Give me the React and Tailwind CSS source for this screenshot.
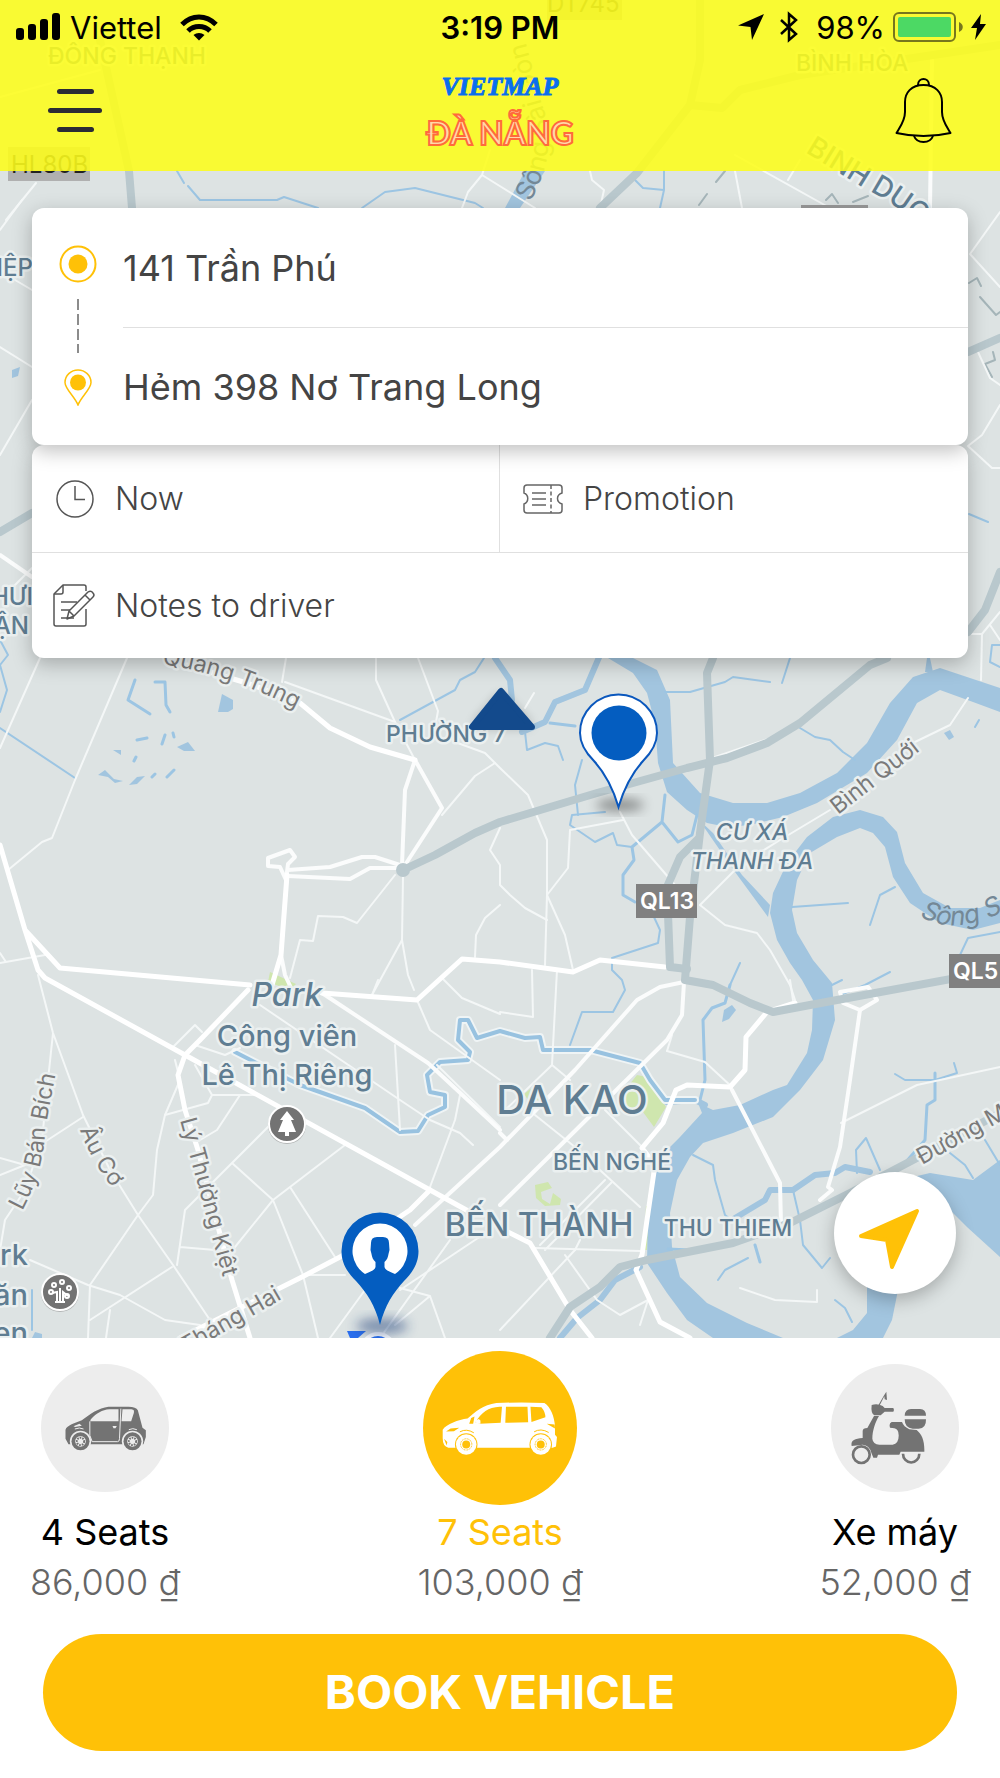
import { useState } from 'react'

const PLACE = '#5f7d92'
const STREET = '#7a7a7a'

const WATER_AREAS = [
  'M608 658 633 673 647 693 655 723 658 763 667 792 687 810 707 823 727 827 750 825 783 817 817 803 867 773 897 740 917 703 940 690 973 702 1000 712V688L940 668 913 677 890 703 867 743 837 773 800 793 767 803 733 803 700 793 673 763 670 700 657 670 633 658Z',
  'M1000 900 980 908 950 908 923 893 905 863 897 832 883 817 860 810 833 817 807 837 787 863 773 893 770 913 777 940 790 963 802 980 813 1000 812 1030 807 1053 787 1085 773 1090 740 1105 713 1110 698 1103 702 1113 680 1137 667 1150 655 1173 648 1213 647 1263 667 1293 687 1320 713 1338H783L747 1323 707 1303 680 1277 672 1247 670 1213 677 1180 690 1157 703 1143 733 1133 773 1117 800 1090 823 1060 835 1020 832 983 813 960 797 933 792 910 797 880 810 853 837 837 860 828 873 833 885 847 893 877 910 903 940 923 973 930 1000 923Z',
  'M900 1180 930 1173 973 1180 1000 1160V1257L967 1227 945 1205Z',
  'M867 1280V1313L853 1330 837 1338H883L892 1320 898 1290Z',
  'M697 818 713 833 742 875 770 905 768 917 735 872 706 830Z',
  'M722 1022 724 1010 732 1005 736 1010 729 1019Z',
  'M505 208 525 171H545L520 208Z',
  'M927 658H930L933 672H925Z',
  'M218 712 222 694 233 700 233 709 228 712Z',
  'M177 747 188 742 195 751 184 751Z',
  'M113 750 121 750 121 755Z',
  'M98 775 105 770 114 779 123 781 115 783 108 777Z',
  'M129 785 137 777 145 776 137 784Z',
  'M12 370 20 367 18 376 12 378Z',
  'M944 733 950 730 954 737 949 740Z',
  'M32 1338 35 1332 42 1334 42 1338Z',
]

const STREAMS = [
  'M177 171 184 183M188 186 200 200H277L284 197 318 208',
  'M362 208 385 192 415 188 475 203 483 208',
  'M635 180 643 188 664 190 660 208M664 171V190',
  'M0 640 8 655 0 665 7 690 0 712',
  'M0 728 75 778',
  'M400 720 455 690 460 680 475 672 484 658',
  'M665 692 690 692 725 682 733 677 770 682M790 658 782 683',
  'M800 728 815 737 830 740 843 752 855 760',
  'M632 847 617 845 613 833 595 842 570 825 572 815 605 812',
  'M525 732 527 750 545 743 558 746 563 760M582 760 575 785 578 815',
  'M653 915 660 930 658 943 612 958 612 970 622 980 625 990 613 1012H582L570 1045',
  'M792 907 848 903M870 925 880 895 895 887M960 955 968 938 1000 932',
  'M693 1155 713 1165 715 1180 725 1215 738 1225',
  'M895 1074 905 1080 935 1080 957 1073 954 1063M857 1173 856 1150 866 1138 880 1170',
  'M793 1190 800 1220 803 1245 822 1268 830 1258M718 1280 725 1270 748 1258M835 1300 845 1308 852 1322',
  'M969 514 988 522M1000 645 992 645 990 662 1000 667M840 995 865 985 890 972M832 985 842 980',
  'M730 985 740 963M975 727 979 720M32 1290V1330M950 1153 965 1165 973 1178M985 1140 1000 1165',
]

const CANALS = [
  'M632 847 634 860 623 875 623 895 635 902M665 795 662 822 678 842 692 835 697 815M662 822 632 847',
  'M700 1100 705 1080 703 1020 712 1008 725 1003 730 985',
  'M935 1073V1100L927 1105 925 1140 905 1163',
  'M135 680 128 700 150 714M155 682H165L166 705 170 712',
  'M165 735 162 744M173 733 174 737M134 761 136 757M152 777 155 774M167 777 174 770M137 740 147 738',
  'M550 723 575 726M668 1249 690 1250M755 1245 760 1262',
]

const CREEKS = [
  'M522 732 545 722 555 702 585 690 600 655',
  'M495 658 510 680 512 700',
  'M735 1218 765 1200 770 1190 793 1190 815 1175 835 1173 845 1167 870 1172',
  'M560 1338 577 1318 600 1300 615 1280 640 1267',
  'M667 1102 695 1100 705 1105',
]

const CANAL = 'M235 1052 300 1085 365 1108 400 1132 418 1131 428 1115 445 1107 445 1095 430 1092 427 1075 440 1062 468 1060 470 1052 458 1040 460 1020 468 1020 477 1038 500 1031 525 1038 540 1037 543 1050 590 1050 640 1063 650 1080 665 1100 695 1100'

const MINOR_ROADS = [
  'M0 97 100 70M6 220 36 183M462 208 468 192 482 175 490 150M482 175 535 208',
  'M590 171 592 180 604 190 600 208M735 171 742 208M735 155 830 208M788 180 800 160',
  'M0 230 22 200M10 277 32 290M0 347 32 367M32 400 0 455M32 568 15 585',
  'M1000 212 970 254 1000 287M978 352 990 378 1000 385M1000 405 982 435 968 446 992 468 1000 468',
  'M968 634H982L1000 612M982 634 981 680M990 625 1000 640',
  'M40 658 0 748M127 658 75 780 52 838 42 842 8 870M285 682 395 722M286 658 282 682',
  'M376 658V680L395 722 415 760M418 658 438 711 436 722M455 742 485 753 500 768 528 795 547 840V895L565 935 573 970',
  'M442 815 475 776 495 763M395 875 357 923 343 917 318 916 313 941 300 940 290 978',
  'M403 877 402 940 408 975 414 990M402 940 372 995M500 828 490 850 500 865 500 885 510 895 525 908 547 920M500 905 485 918 476 935 475 957',
  'M547 895 545 965M623 820 570 830 568 868 547 895M620 812 632 835 675 885M700 905 725 925 757 933 770 950 790 985 795 1000',
  'M700 905 740 865 780 840 830 810M915 742 950 725 968 698M715 757 780 735M525 708 534 693',
  'M0 963 45 955M0 953 6 962M38 975 53 1033 83 1115 110 1170 138 1215 173 1265 210 1320M53 1033 48 1080 42 1140 25 1190 5 1220 0 1250',
  'M83 1117 40 1145M0 1158 25 1165 0 1175M173 1047 195 1025 202 1032M195 1045 225 1055 240 1048M165 1115 208 1103 212 1095H255M195 1065 212 1095',
  'M165 1115 157 1150 153 1195 138 1215 90 1285 88 1338M175 1060 180 1080 165 1115M30 1260 88 1285 120 1295 165 1320 200 1325M90 1320 172 1267M110 1310 106 1338',
  'M240 1095 217 1130 200 1140M270 1125 232 1163 185 1210 177 1265M232 1163 273 1200 290 1187 345 1145M273 1200 235 1247M273 1200 303 1275 318 1338M290 1187 335 1257M180 1247 215 1250',
  'M305 1275H345M365 1290 330 1338M400 1288 430 1296 445 1338M430 1296 395 1325M400 1290 490 1230M380 1338 450 1240',
  'M395 1045 400 1130M417 1000 430 1030 465 1055 500 1080M372 995 378 980M437 1065 500 1127M260 1005 400 1100 430 1120 460 1133 473 1145M460 1095 455 1120 430 1187',
  'M442 978 462 998 500 1014M532 970 533 1017 500 1012M557 970 552 1065 500 1115M552 1065 570 1080M535 1115 575 1147 640 1207M605 1110 642 1147',
  'M605 1180 540 1245M612 1182 545 1250M535 1248 640 1251M500 1330 575 1250M565 1255 597 1300 620 1315 648 1300M667 1051 705 1062 732 1087',
  'M841 1123 917 1085 1000 1067M740 1288 775 1300 817 1302 817 1290M507 1230 480 1210M575 1250 580 1240M790 980 793 1000M667 1051 672 1035M640 1325 648 1300',
]

const STREETS = [
  'M415 760 405 790 402 865M415 760 442 808 405 865',
  'M286 880 280 867 268 866V858L290 850 295 857 288 864 286 880',
  'M288 870 330 867 362 857H375L403 866M288 876 350 879 370 868H400',
  'M281 955 285 975 292 990M322 993 428 1063 500 1130',
  'M415 1225 500 1147 575 1070 637 1000 660 987 684 982 682 1015 667 1040 500 1205',
  'M732 1090 780 1183 781 1225M860 1010 850 1080 840 1147 828 1187 832 1190 820 1200',
  'M840 992 868 987 877 1000 860 1010 843 1003ZM500 1133 507 1140',
  'M932 60 930 208M0 555 32 577',
]

const AVENUES = [
  'M170 660 250 684 300 703 330 728 370 747 415 760',
  'M0 845 25 930 60 968 250 985M25 930 38 970 45 978 185 1055 430 1190 470 1212',
  'M287 875 281 955 272 985M322 993 417 1000 462 959 500 962 573 972 600 960 665 967',
  'M248 990 200 1040 185 1055 178 1075 185 1110 198 1150 232 1280 250 1338',
  'M180 1338 300 1278 340 1257 410 1210 430 1190',
  'M500 1228 530 1243 570 1310 592 1338',
  'M795 1003 767 1012 746 1037 745 1070 730 1087 687 1085 676 1090 663 1123 642 1148 655 1165 647 1220 642 1255 636 1270 660 1322 690 1338',
]

const HIGHWAYS = [
  'M700 0V60L690 105 637 173 600 208M690 105 722 108 740 90 800 75 1000 45',
  'M100 40 129 171 132 208M0 532 32 513',
  'M968 352 1000 338M1000 572 985 610 968 632',
  'M403 870 435 855 475 833 500 822 597 793 687 768 727 758 767 743 800 723 870 665 887 658',
  'M713 658 707 673 710 760 700 833 690 917 685 980 713 985 750 1003 773 1012 810 1005 1000 970',
  'M697 840 680 857 667 887 670 967 687 969',
  'M550 1338 570 1307 600 1287 620 1267 647 1260 733 1243 790 1223 850 1193 913 1160 1000 1113',
]

const TRACKS = 'M716 182 725 171M699 205 707 194M826 200 832 194 838 203M853 202 868 196M969 283 977 278 981 286M980 297 996 315 1000 312M993 352 995 360 985 364 992 377'

const PLACES = [
  { text: 'ĐÔNG THẠNH', x: 48, y: 64, size: 23 },
  { text: 'BÌNH HÒA', x: 796, y: 71, size: 23 },
  { text: 'IỆP', x: 33, y: 276, size: 24, anchor: 'end' },
  { text: 'HƯI', x: 33, y: 605, size: 24, anchor: 'end' },
  { text: 'ẬN', x: 29, y: 634, size: 24, anchor: 'end' },
  { text: 'PHƯỜNG 7', x: 386, y: 742, size: 23 },
  { text: 'CƯ XÁ', x: 752, y: 840, size: 23, anchor: 'middle', italic: true },
  { text: 'THANH ĐA', x: 752, y: 869, size: 23, anchor: 'middle', italic: true },
  { text: 'Park', x: 287, y: 1006, size: 32, anchor: 'middle', italic: true },
  { text: 'Công viên', x: 287, y: 1046, size: 29, anchor: 'middle' },
  { text: 'Lê Thị Riêng', x: 287, y: 1085, size: 29, anchor: 'middle' },
  { text: 'DA KAO', x: 572, y: 1114, size: 40, anchor: 'middle' },
  { text: 'BẾN NGHÉ', x: 612, y: 1170, size: 23, anchor: 'middle' },
  { text: 'BẾN THÀNH', x: 539, y: 1236, size: 32, anchor: 'middle' },
  { text: 'THU THIEM', x: 728, y: 1236, size: 23, anchor: 'middle' },
  { text: 'rk', x: 28, y: 1265, size: 29, anchor: 'end' },
  { text: 'ăn', x: 28, y: 1305, size: 29, anchor: 'end' },
  { text: 'en', x: 28, y: 1343, size: 29, anchor: 'end' },
]

const CURVED = [
  { id: 'quang-trung', text: 'Quang Trung', d: 'M162 664Q240 676 320 722', size: 23 },
  { id: 'binh-quoi', text: 'Bình Quới', d: 'M838 815 940 735', size: 23 },
  { id: 'luy-ban-bich', text: 'Lũy Bán Bích', d: 'M22 1211Q44 1170 45 1130L62 1040', size: 23 },
  { id: 'au-co', text: 'Âu Cơ', d: 'M80 1130Q90 1160 120 1198', size: 23 },
  { id: 'ly-thuong-kiet', text: 'Lý Thường Kiệt', d: 'M180 1120 232 1310', size: 23 },
  { id: 'thang-hai', text: 'Tháng Hai', d: 'M186 1354 310 1283', size: 23 },
  { id: 'duong-m', text: 'Đường M', d: 'M922 1165 1040 1100', size: 23 },
  { id: 'song-s', text: 'Sông S', d: 'M920 916Q960 940 1020 902', size: 26, italic: true, bare: true },
  { id: 'song-sai-gon', text: 'Sông Sài Gòn', d: 'M530 202Q560 150 542 105L520 20', size: 26, bare: true },
  { id: 'binh-duong', text: 'BINH DUONG', d: 'M805 152 860 186Q900 205 950 250', size: 28, color: PLACE },
]

function Lines({ items, width, color }) {
  return (
    <g fill="none" stroke={color} strokeWidth={width} strokeLinejoin="round" strokeLinecap="round">
      {items.map((d) => <path key={d} d={d} />)}
    </g>
  )
}

function RoadBadge({ x, y, width, label }) {
  return (
    <g>
      <rect x={x} y={y} width={width} height="34" fill="#808080" />
      <text x={x + 4} y={y + 25} fontSize="23" fontWeight="600" fill="#fff">{label}</text>
    </g>
  )
}

function MapView() {
  return (
    <svg
      className="absolute inset-0 h-full w-full"
      viewBox="0 0 1000 1338"
      preserveAspectRatio="xMidYMin slice"
      role="img"
      aria-label="Map"
    >
      <defs>
        <filter id="soft" x="-50%" y="-50%" width="200%" height="200%">
          <feGaussianBlur stdDeviation="6" />
        </filter>
      </defs>

      <rect width="1000" height="1338" fill="#dde3e3" />

      <g fill="#cfe6ae">
        <path d="M625 1090 637 1075 647 1077 666 1107 654 1127 643 1112 627 1112Z" />
        <path d="M524 1094 534 1086 545 1090 546 1104 535 1110Z" />
        <path d="M270 972 296 984 290 990 268 982Z" />
        <path d="M646 1206H651L647 1250H644Z" />
        <path d="M535 1185 548 1182 552 1188 541 1192 542 1199 550 1204 553 1193 561 1199 560 1205 545 1206 536 1198Z" />
      </g>

      <g fill="#a2c5df">{WATER_AREAS.map((d) => <path key={d} d={d} />)}</g>
      <Lines items={STREAMS} width={2} color="#9cc5e3" />
      <Lines items={CANALS} width={3} color="#9cc5e3" />
      <Lines items={CREEKS} width={6} color="#a2c5df" />
      <Lines items={[CANAL]} width={8} color="#eff4f5" />
      <Lines items={[CANAL]} width={4} color="#98c2e0" />

      <Lines items={[TRACKS]} width={2} color="#a5b5b9" />
      <Lines items={MINOR_ROADS} width={2} color="#f4f7f7" />
      <Lines items={STREETS} width={4} color="#fbfcfc" />
      <Lines items={AVENUES} width={5} color="#ffffff" />
      <Lines items={HIGHWAYS} width={8} color="#b9c8cd" />
      <circle cx="403" cy="870" r="7" fill="#b9c8cd" />

      <g fontFamily="Inter, sans-serif">
        <rect x="547" y="-14" width="75" height="34" fill="#b0b0b0" />
        <text x="547" y="12" fontSize="24" fill="#444">DT745</text>
        <rect x="8" y="147" width="82" height="34" fill="#b0b0b0" />
        <text x="11" y="173" fontSize="24" fill="#222">HL80B</text>
        <rect x="801" y="205" width="67" height="34" fill="#9a9a9a" />
        <RoadBadge x={636} y={884} width={61} label="QL13" />
        <RoadBadge x={949} y={954} width={61} label="QL5" />

        <g stroke="#ebf0f0" strokeWidth="5" strokeLinejoin="round" paintOrder="stroke" fontWeight="500">
          {PLACES.map((p) => (
            <text
              key={p.text}
              x={p.x}
              y={p.y}
              fontSize={p.size}
              fill={PLACE}
              textAnchor={p.anchor || 'start'}
              fontStyle={p.italic ? 'italic' : 'normal'}
            >
              {p.text}
            </text>
          ))}
        </g>

        {CURVED.map((c) => (
          <g key={c.id}>
            <path id={c.id} d={c.d} fill="none" />
            <text
              fontSize={c.size}
              fill={c.color || (c.bare ? '#748896' : STREET)}
              fontStyle={c.italic ? 'italic' : 'normal'}
              fontWeight={c.color ? 500 : 400}
              stroke={c.bare ? 'none' : '#ebf0f0'}
              strokeWidth="5"
              strokeLinejoin="round"
              paintOrder="stroke"
            >
              <textPath href={`#${c.id}`}>{c.text}</textPath>
            </text>
          </g>
        ))}
      </g>

      {/* park markers */}
      <g fill="#737373" stroke="#fff" strokeWidth="2">
        <circle cx="287" cy="1125" r="19" fill="#8a8a8a" stroke="none" opacity="0.5" />
        <circle cx="287" cy="1124" r="18" />
        <circle cx="60" cy="1293" r="19" fill="#8a8a8a" stroke="none" opacity="0.5" />
        <circle cx="60" cy="1292" r="18" />
      </g>
      <path d="M287 1111 294 1120H291L296 1132H289V1136H285V1132H278L283 1120H280Z" fill="#fff" />
      <g fill="none" stroke="#fff" strokeWidth="2">
        <path d="M55 1302H65M60 1302V1288M57 1302V1292L52 1293M63 1302V1292L68 1296" />
        <circle cx="51" cy="1292" r="2" />
        <circle cx="54" cy="1285" r="2" />
        <circle cx="62" cy="1282" r="2" />
        <circle cx="69" cy="1288" r="2" />
        <circle cx="67" cy="1296" r="2" />
      </g>

      {/* heading arrow */}
      <path d="M501 694 473 726H532Z" fill="#000" opacity="0.35" filter="url(#soft)" />
      <path d="M501 691 472 727H532Z" fill="#134a8c" stroke="#134a8c" strokeWidth="6" strokeLinejoin="round" />

      {/* destination pin */}
      <ellipse cx="620" cy="805" rx="24" ry="6" fill="#000" opacity="0.4" filter="url(#soft)" />
      <path
        d="M618.500 807C612 785 604 772 594 761C585 752 580 744 580 733A38.500 38.500 0 0 1 657 733C657 744 652 752 643 761C633 772 625 785 618.500 807Z"
        fill="#fff"
        stroke="#0a57bd"
        strokeWidth="2"
      />
      <circle cx="619" cy="733" r="27.500" fill="#045dc0" />

      {/* pickup pin */}
      <circle cx="379" cy="1368" r="32" fill="#7f9fd6" opacity="0.8" />
      <path d="M347 1331H366L358 1338H350Z" fill="#2b6fee" />
      <circle cx="378" cy="1350" r="16" fill="#2b6fee" stroke="#fff" strokeWidth="4" />
      <ellipse cx="382" cy="1326" rx="26" ry="8" fill="#1c3c78" opacity="0.5" filter="url(#soft)" />
      <path
        d="M380 1325C375 1305 367 1293 356 1281C346 1271 341.500 1262 341.500 1251A38.500 38.500 0 0 1 418.500 1251C418.500 1262 414 1271 404 1281C393 1293 385 1305 380 1325Z"
        fill="#045dc0"
      />
      <path
        d="M365 1274A27.500 27.500 0 1 1 395 1274C390 1272 385 1270 384.500 1267V1262C387 1260 388 1257 388.500 1254L389.500 1250L389 1243Q389 1237 383 1237H377Q371 1237 371 1243L370.500 1250L371.500 1254C372 1257 373 1260 375.500 1262V1267C375 1270 370 1272 365 1274Z"
        fill="#fff"
      />
    </svg>
  )
}

function StatusBar() {
  return (
    <div className="grid h-[54px] grid-cols-3 items-center px-[14px] text-[31px] leading-none text-black">
      <div className="flex items-center gap-[10px]">
        <svg className="h-7 w-[46px]" viewBox="0 0 46 28" aria-hidden="true">
          <rect x="2" y="15" width="8" height="12" rx="3" />
          <rect x="14" y="11" width="8" height="16" rx="3" />
          <rect x="26" y="6" width="8" height="21" rx="3" />
          <rect x="38" y="0" width="8" height="27" rx="3" />
        </svg>
        <span>Viettel</span>
        <svg className="ml-2 h-[27px] w-[38px]" viewBox="0 0 38 27" fill="none" stroke="#000" strokeWidth="5" aria-hidden="true">
          <path d="M2 10.500C12 0.500 26 0.500 36 10.500" />
          <path d="M8 17C14 11 24 11 30 17" />
          <path d="M19 26.500 13.500 21C16.500 18.300 21.500 18.300 24.500 21Z" fill="#000" stroke="none" />
        </svg>
      </div>
      <time className="text-center font-semibold">3:19 PM</time>
      <div className="flex items-center justify-end">
        <svg className="mr-4 h-[26px] w-[26px]" viewBox="0 0 26 26" aria-hidden="true">
          <path d="M26 0 14 26 12.500 13 0 11.500Z" />
        </svg>
        <svg className="mr-[18px] h-8 w-[18px]" viewBox="0 0 18 32" fill="none" stroke="#000" strokeWidth="2.500" aria-hidden="true">
          <path d="M1 9 16 23 9 29V3L16 9 1 23" />
        </svg>
        <span>98%</span>
        <svg className="ml-2 h-[30px] w-[70px]" viewBox="0 0 70 30" aria-hidden="true">
          <rect x="1" y="1" width="61" height="28" rx="5" fill="none" stroke="#77761d" strokeWidth="2" />
          <rect x="5" y="5" width="53" height="20" rx="2" fill="#4cd964" />
          <path d="M66 10C71 12 71 18 66 20Z" fill="#77761d" />
        </svg>
        <svg className="ml-2 h-[26px] w-[15px]" viewBox="0 0 15 26" aria-hidden="true">
          <path d="M10 0 0 14H6L4 26 15 10H9Z" />
        </svg>
      </div>
    </div>
  )
}

function Header() {
  return (
    <header className="bg-[#fdfd1a]/88">
      <StatusBar />
      <div className="grid h-[117px] grid-cols-3 items-center px-12 pb-1">
        <button type="button" aria-label="Menu" className="flex w-[54px] flex-col items-center gap-[14px]">
          <span className="h-[5px] w-[37px] rounded-full bg-[#2b2b35]" />
          <span className="h-[5px] w-[54px] rounded-full bg-[#2b2b35]" />
          <span className="h-[5px] w-[37px] rounded-full bg-[#2b2b35]" />
        </button>
        <h1 className="flex flex-col items-center gap-2 pt-1">
          <span className="font-['Liberation_Serif',serif] text-[26px] leading-[32px] font-bold text-[#0a6eee] italic [-webkit-text-stroke:1px_#0a6eee]">VIETMAP</span>
          <span className="font-[Lato,sans-serif] text-[32px] leading-[44px] font-bold text-[#ffd9a8] [-webkit-text-stroke:2px_#ff6a3c]">ĐÀ NẴNG</span>
        </h1>
        <button type="button" aria-label="Notifications" className="justify-self-end">
          <svg className="h-[66px] w-[57px]" viewBox="0 0 57 66" fill="none" stroke="#000" strokeWidth="2" strokeLinejoin="round">
            <path d="M23 7C23 -1 34 -1 34 7" />
            <path d="M28.500 7C16 7 10 15 10 24V34C10 43 5 49 1.500 55C19 59 38 59 55.500 55C52 49 47 43 47 34V24C47 15 41 7 28.500 7Z" />
            <path d="M19 58C22 66 35 66 38 58" />
          </svg>
        </button>
      </div>
    </header>
  )
}

function RouteCard() {
  return (
    <div className="relative z-10 flex rounded-xl bg-white text-[#444] shadow-[0_6px_20px_rgba(0,0,0,0.25)]">
      <div className="flex w-[91px] shrink-0 flex-col items-center gap-4 pt-[37px]">
        <svg className="h-[38px] w-[38px]" viewBox="0 0 38 38" aria-hidden="true">
          <circle cx="19" cy="19" r="17.500" fill="none" stroke="#ffc107" strokeWidth="2" />
          <circle cx="19" cy="19" r="9.500" fill="#ffc107" />
        </svg>
        <svg className="h-[54px] w-[2px]" viewBox="0 0 2 54" aria-hidden="true">
          <path d="M1 0V54" stroke="#8c8c8c" strokeWidth="2" strokeDasharray="11 4" />
        </svg>
        <svg className="h-[37px] w-[28px]" viewBox="0 0 28 37" aria-hidden="true">
          <path d="M14 36C11 28 1 20 1 13.500A13 12.500 0 0 1 27 13.500C27 20 17 28 14 36Z" fill="none" stroke="#ffc107" strokeWidth="1.500" />
          <circle cx="14" cy="13.500" r="8" fill="#ffc107" />
        </svg>
      </div>
      <div className="flex min-w-0 flex-1 flex-col divide-y divide-[#e0e0e0] text-[36px]">
        <input aria-label="Pickup address" defaultValue="141 Trần Phú" className="h-[120px] w-full bg-transparent outline-none" />
        <input aria-label="Destination address" defaultValue="Hẻm 398 Nơ Trang Long" className="h-[117px] w-full bg-transparent outline-none" />
      </div>
    </div>
  )
}

function OptionsCard() {
  return (
    <div className="rounded-xl bg-white text-[32px] font-light text-[#444] shadow-[0_6px_20px_rgba(0,0,0,0.25)]">
      <div className="grid grid-cols-2 divide-x divide-[#e0e0e0] border-b border-[#e0e0e0]">
        <button type="button" className="flex h-[107px] items-center gap-5 pl-[23px]">
          <svg className="h-[38px] w-10" viewBox="0 0 40 38" fill="none" stroke="#555" strokeWidth="1.500" aria-hidden="true">
            <circle cx="20" cy="19" r="18" />
            <path d="M20 6V19.500H30" />
          </svg>
          Now
        </button>
        <button type="button" className="flex h-[107px] items-center gap-5 pl-[23px]">
          <svg className="h-[30px] w-10" viewBox="0 0 40 30" fill="none" stroke="#666" strokeWidth="1.500" aria-hidden="true">
            <path d="M4 1H36C38 1 39 2 39 4V9C33 11 33 18 39 20V26C39 28 38 29 36 29H4C2 29 1 28 1 26V20C6 18 6 11 1 9V4C1 2 2 1 4 1Z" />
            <path d="M9 9H23M9 15H23M9 21H23" />
            <path d="M28 1V29" strokeDasharray="4 2.500" />
          </svg>
          Promotion
        </button>
      </div>
      <button type="button" className="flex h-[105px] w-full items-center gap-5 pl-[21px]">
        <svg className="h-[43px] w-[42px]" viewBox="0 0 42 43" fill="none" stroke="#555" strokeWidth="1.500" strokeLinejoin="round" aria-hidden="true">
          <path d="M33 7V3Q33 1 31 1H10L1 10V40Q1 42 3 42H31Q33 42 33 40V25" />
          <path d="M10 1V8Q10 10 8 10H1M8 18H24M8 26H17M8 34H21" />
          <path d="M14 35 16 27 35 8Q38 6 40 9Q42 11 40 13L21 32ZM16 27 21 32M32 11 37 16" />
        </svg>
        Notes to driver
      </button>
    </div>
  )
}

function SmallCar() {
  return (
    <svg className="h-[45px] w-[81px]" viewBox="195 197 242 135" fill="#737373" aria-hidden="true">
      <path d="M196 268C200 255 225 248 245 240C270 220 295 203 325 199H385Q408 199 413 210L427 262L437 270V290L430 312H205L196 295Z" />
      <path d="M272 237C290 218 305 209 328 207H355V243H270ZM367 207H390C400 207 403 210 401 218L393 243H364ZM220 258 238 250 245 256 225 260Z" fill="#ededed" />
      <path d="M269 243V285L276 304H352Q358 304 358 295L362 205M386 268Q398 262 410 268M224 266Q238 260 250 266" fill="none" stroke="#ededed" strokeWidth="3" />
      <path d="M337 257H350L346 264H340Z" fill="#ededed" />
      {[241, 397].map((cx) => (
        <g key={cx}>
          <circle cx={cx} cy="303" r="32" fill="#ededed" />
          <circle cx={cx} cy="303" r="27" />
          <circle cx={cx} cy="303" r="16" fill="#ededed" />
          <circle cx={cx} cy="303" r="11" fill="none" stroke="#737373" strokeWidth="6" strokeDasharray="5 3" />
        </g>
      ))}
    </svg>
  )
}

function Van() {
  return (
    <svg className="h-[53px] w-[116px]" viewBox="1327 184 348 160" fill="#fff" aria-hidden="true">
      <path d="M1328 268C1340 250 1375 238 1403 234C1425 215 1450 192 1490 187Q1570 184 1635 187C1655 200 1664 228 1667 255V283L1673 290L1670 318L1660 322H1345Q1327 318 1328 290Z" />
      <path d="M1427 245C1445 215 1465 200 1500 198H1507L1503 247L1440 250ZM1519 198H1584L1586 245L1517 247ZM1593 198 1626 200Q1638 214 1638 230L1596 244ZM1408 250 1414 232 1424 228 1420 250ZM1338 273 1352 264 1378 262 1362 272ZM1642 250 1666 252 1667 264ZM1332 295 1342 305 1340 315Z" fill="#ffc107" />
      <path d="M1427 240 1437 235 1442 240V250H1430Z" />
      <path d="M1380 274Q1400 263 1422 277M1604 274Q1624 262 1648 276" fill="none" stroke="#ffc107" strokeWidth="3" />
      {[1399, 1624].map((cx) => (
        <g key={cx}>
          <circle cx={cx} cy="312" r="34" fill="#ffc107" />
          <circle cx={cx} cy="312" r="31" />
          <circle cx={cx} cy="312" r="12" fill="#ffc107" />
          <circle cx={cx} cy="312" r="17" fill="none" stroke="#ffc107" strokeWidth="3" strokeDasharray="3 2" />
        </g>
      ))}
    </svg>
  )
}

function Scooter() {
  return (
    <svg className="h-[74px] w-[88px]" viewBox="1055 155 264 222" fill="#737373" aria-hidden="true">
      <path d="M1137 198 1153 170 1161 157 1163 182 1156 180 1155 171 1140 200Z" />
      <path d="M1117 197Q1135 192 1150 200L1156 206H1182Q1186 212 1182 217H1156L1144 228H1125Q1114 222 1117 197Z" />
      <path d="M1124 230H1139C1127 250 1119 275 1119 298Q1121 315 1140 316H1180Q1198 313 1198 290Q1199 270 1185 267L1172 265Q1168 252 1177 248H1208Q1213 262 1230 270L1252 272C1268 285 1276 305 1275 337H1204L1200 346H1136L1133 355H1122L1116 340Q1110 318 1090 316L1057 320C1054 305 1062 299 1090 296V275Q1090 266 1104 266Z" />
      <path d="M1216 229Q1217 209 1235 209H1262Q1280 210 1280 229ZM1216 240H1280Q1281 268 1258 268H1240Q1216 266 1216 240Z" />
      <circle cx="1086" cy="346" r="25" fill="none" stroke="#737373" strokeWidth="8" />
      <path d="M1211 343A24 26 0 0 0 1260 343" fill="none" stroke="#737373" strokeWidth="8" />
    </svg>
  )
}

const VEHICLES = [
  { id: 'car4', name: '4 Seats', price: '86,000 ₫', Icon: SmallCar },
  { id: 'car7', name: '7 Seats', price: '103,000 ₫', Icon: Van },
  { id: 'bike', name: 'Xe máy', price: '52,000 ₫', Icon: Scooter },
]

function VehicleOption({ vehicle, active, onSelect }) {
  const { name, price, Icon } = vehicle
  return (
    <button type="button" aria-pressed={active} onClick={onSelect} className="flex w-44 flex-col items-center">
      <span className="flex h-[154px] items-center">
        <span className={`flex items-center justify-center rounded-full ${active ? 'h-[154px] w-[154px] bg-[#ffc107]' : 'h-32 w-32 bg-[#ededed]'}`}>
          <Icon />
        </span>
      </span>
      <span className={`pt-[2px] text-[36px] leading-[50px] ${active ? 'text-[#ffc107]' : 'text-black'}`}>{name}</span>
      <span className="text-[36px] leading-[50px] font-light whitespace-nowrap text-[#666]">{price}</span>
    </button>
  )
}

export default function App() {
  const [selected, setSelected] = useState('car7')

  return (
    <div className="flex min-h-screen flex-col bg-white font-[Inter,sans-serif]">
      <main className="relative flex-1 overflow-hidden">
        <MapView />
        <div className="relative">
          <Header />
          <div className="px-8 pt-[37px]">
            <RouteCard />
            <OptionsCard />
          </div>
        </div>
        <button
          type="button"
          aria-label="Center on my location"
          className="absolute right-11 bottom-11 flex h-[122px] w-[122px] items-center justify-center rounded-full bg-white shadow-[0_6px_18px_rgba(0,0,0,0.25)]"
        >
          <svg className="h-20 w-20" viewBox="0 0 80 80" fill="#ffc107" stroke="#ffc107" strokeWidth="4" strokeLinejoin="round">
            <path d="M6 43 62 18 37 74 32 47Z" />
          </svg>
        </button>
      </main>

      <section className="bg-white px-[17px] pt-[13px] pb-[27px]">
        <div className="flex justify-between">
          {VEHICLES.map((v) => (
            <VehicleOption key={v.id} vehicle={v} active={v.id === selected} onSelect={() => setSelected(v.id)} />
          ))}
        </div>
        <div className="mt-[27px] px-[26px]">
          <button type="button" className="h-[117px] w-full rounded-full bg-[#ffc107] text-[47px] font-bold text-white">
            BOOK VEHICLE
          </button>
        </div>
      </section>
    </div>
  )
}
